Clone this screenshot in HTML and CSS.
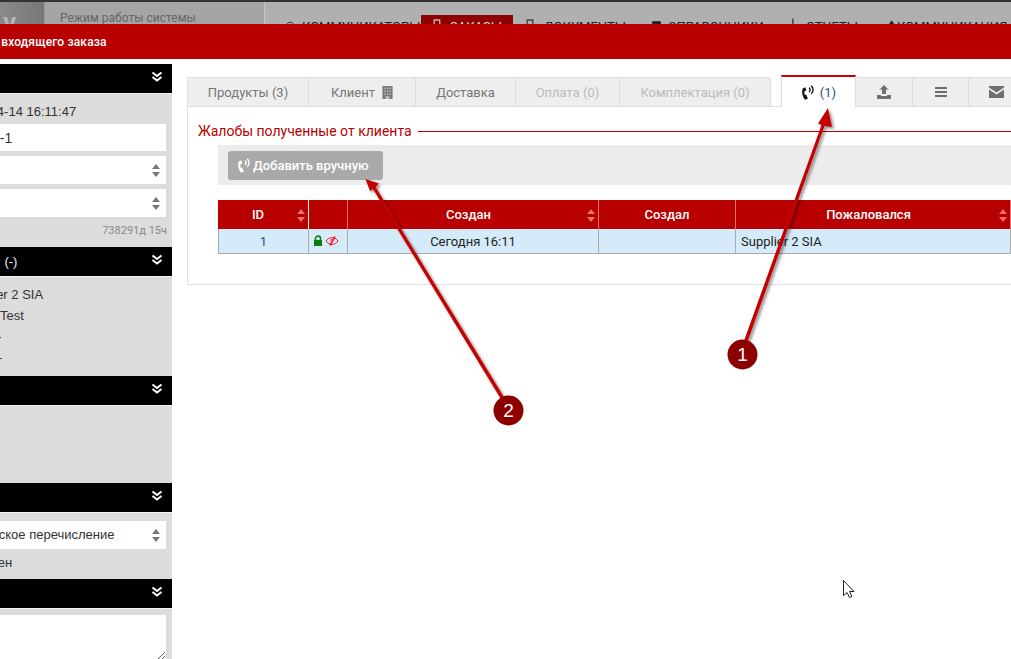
FILE: index.html
```html
<!DOCTYPE html>
<html lang="en">
<head>
  <meta charset="UTF-8">
  <title>Данные входящего заказа</title>
  <link rel="stylesheet" href="styles.css">
</head>
<body>
  <svg class="defs" width="0" height="0">
    <symbol id="chev" viewBox="0 0 12 12"><path d="M1.500 1.500 6 5l4.500-3.500M1.500 6 6 9.500 10.500 6" fill="none" stroke="currentColor" stroke-width="2"/></symbol>
    <symbol id="phone" viewBox="0 0 14 14"><path d="M4 2 1.800 3C.4 6 1.100 10.800 3.800 13.700L6.400 12.500 4.800 8.800 3.500 9.300C3.100 8 3.100 6.500 3.400 5.600L5 5.300z" fill="currentColor"/><path d="M7.500 2.500a2.500 2.500 0 0 1 0 4M9.500.8a4.700 4.700 0 0 1 0 7.400" fill="none" stroke="currentColor" stroke-width="1.300"/></symbol>
  </svg>

  <!-- top menu, dimmed behind the window -->
  <div class="topbar">
    <div class="brand">v</div>
    <div class="mode">Режим работы системы</div>
    <div class="menu">
      <span class="menu-item m1"><i class="mi">○</i>Коммуникаторы</span>
      <span class="menu-item m2 active"><i class="mi">▯</i>Заказы</span>
      <span class="menu-item m3"><i class="mi">▯</i>Документы</span>
      <span class="menu-item m4"><i class="mi">■</i>Справочники</span>
      <span class="menu-item m5"><i class="mi">⊥</i>Отчеты</span>
      <span class="menu-item m6"><i class="mi">♦</i>Коммуникация</span>
    </div>
  </div>

  <div class="window">
    <div class="window-title">Данные входящего заказа</div>
    <div class="window-body">

      <div class="sidebar">
        <div class="panel-head"><svg class="chev"><use href="#chev"/></svg></div>
        <div class="panel p-main">
          <div class="line l-date">Создан: 2021-04-14 16:11:47</div>
          <div class="field f-num">Заказ-2021-04-1</div>
          <div class="field select"><i class="updown"></i></div>
          <div class="field select"><i class="updown"></i></div>
          <div class="age">738291д 15ч</div>
        </div>
        <div class="panel-head head-client">Контрагент: (-)<svg class="chev"><use href="#chev"/></svg></div>
        <div class="panel p-client">
          <div class="line l-sup">Supplier 2 SIA</div>
          <div class="line l-test">Контакт: Test</div>
          <div class="line l-phone">Телефон: -</div>
          <div class="line l-mail">Эл. почта: -</div>
        </div>
        <div class="panel-head"><svg class="chev"><use href="#chev"/></svg></div>
        <div class="panel p-empty"></div>
        <div class="panel-head"><svg class="chev"><use href="#chev"/></svg></div>
        <div class="panel p-pay">
          <div class="field select f-pay">Банковское перечисление<i class="updown"></i></div>
          <div class="line l-paid">Не оплачен</div>
        </div>
        <div class="panel-head"><svg class="chev"><use href="#chev"/></svg></div>
        <div class="panel p-note">
          <textarea class="memo"></textarea>
        </div>
      </div>

      <div class="content">
        <div class="tabs">
          <div class="tab">Продукты (3)</div>
          <div class="tab">Клиент
            <svg class="tab-ico" width="11" height="13" viewBox="0 0 11 14"><path d="M0 0h11v14H0z" fill="#7b7b7b"/><path d="M2 2h1.500v1.500H2zM4.800 2h1.500v1.500H4.800zM7.500 2H9v1.500H7.500zM2 5h1.500v1.500H2zM4.800 5h1.500v1.500H4.800zM7.500 5H9v1.500H7.500zM2 8h1.500v1.500H2zM4.800 8h1.500v1.500H4.800zM7.500 8H9v1.500H7.500zM3.500 11h4v3h-4z" fill="#c4c4c4"/></svg>
          </div>
          <div class="tab">Доставка</div>
          <div class="tab muted">Оплата (0)</div>
          <div class="tab muted">Комплектация (0)</div>
          <div class="tab spacer"></div>
          <div class="tab current"><svg class="cur-ico" width="15" height="15"><use href="#phone"/></svg> <span class="count">(1)</span></div>
          <div class="tab">
            <svg width="14" height="14" viewBox="0 0 14 14"><path d="M7 0l4.500 4.500H9V9H5V4.500H2.500zM0 10h4v1h6v-1h4v4H0z" fill="#6f6f6f"/></svg>
          </div>
          <div class="tab">
            <svg width="14" height="12" viewBox="0 0 14 12"><path d="M1 1h12v2H1zM1 5h12v2H1zM1 9h12v2H1z" fill="#6f6f6f"/></svg>
          </div>
          <div class="tab tab-mail">
            <svg width="15" height="12" viewBox="0 0 15 12"><path d="M0 0h15v1.500L7.500 6.500 0 1.500zM0 3.500l7.500 5 7.500-5V12H0z" fill="#6f6f6f"/></svg>
          </div>
        </div>

        <div class="tab-body">
          <div class="legend"><span>Жалобы полученные от клиента</span></div>
          <div class="toolbar">
            <button class="btn"><svg class="btn-ico" width="15" height="15"><use href="#phone"/></svg>Добавить вручную</button>
          </div>
          <table class="grid">
            <colgroup>
              <col class="c-id"><col class="c-flags"><col class="c-date"><col class="c-by"><col class="c-who">
            </colgroup>
            <thead>
              <tr>
                <th class="sort">ID<i class="updown"></i></th>
                <th></th>
                <th class="sort">Создан<i class="updown"></i></th>
                <th>Создал</th>
                <th class="sort">Пожаловался<i class="updown"></i></th>
              </tr>
            </thead>
            <tbody>
              <tr>
                <td class="center num">1</td>
                <td class="flags">
                  <svg width="10" height="12" viewBox="0 0 10 12"><path d="M2.500 5V3.500a2.500 2.500 0 0 1 5 0V5" fill="none" stroke="#0a7d0a" stroke-width="1.500"/><path d="M1 5h8v6H1z" fill="#0a7d0a"/></svg>
                  <svg width="14" height="10" viewBox="0 0 14 10"><path d="M1 5c3-4.500 9-4.500 12 0-3 4.500-9 4.500-12 0z" fill="none" stroke="#f01a2a" stroke-width="1"/><path d="M5 5a2.200 2.200 0 0 1 3-2z" fill="#f01a2a"/><path d="M10 .5 5 9.500" stroke="#f01a2a" stroke-width="1.600"/></svg>
                </td>
                <td class="center">Сегодня 16:11</td>
                <td></td>
                <td>Supplier 2 SIA</td>
              </tr>
            </tbody>
          </table>
        </div>
      </div>
    </div>
  </div>

  <!-- callouts drawn over the screenshot -->
  <svg class="callouts" width="1011" height="659" viewBox="0 0 1011 659">
    <defs>
      <filter id="soft" x="-20%" y="-20%" width="140%" height="140%">
        <feDropShadow dx="2" dy="2" stdDeviation="1.500" flood-color="#000" flood-opacity="0.45"/>
      </filter>
    </defs>
    <g fill="#c40000" filter="url(#soft)">
      <path d="M740 352 821.500 125 818 123.500 828 108 832 127 824.500 126 743.500 353z"/>
      <path d="M507 409 373 189 370 191 365.500 179 379 183.500 375.500 187 510 407z"/>
    </g>
    <circle cx="742.500" cy="354.500" r="15" fill="#8c0000"/>
    <circle cx="508.500" cy="410.500" r="15" fill="#8c0000"/>
    <text x="742.500" y="361" class="callout-num">1</text>
    <text x="508.500" y="417" class="callout-num">2</text>
    <path d="M843.500 580.500v15l3.500-3 2.500 5 2.500-1-2.500-5h4.500z" fill="#fff" stroke="#222" stroke-width="1"/>
  </svg>
</body>
</html>
```

FILE: styles.css
```css
html, body {
  margin: 0;
  padding: 0;
  height: 100%;
  overflow: hidden;
}

body {
  position: relative;
  width: 1011px;
  height: 659px;
  font-family: 'Roboto', sans-serif;
  font-size: 13px;
  color: #333;
  background-color: white;
}

.defs {
  position: absolute;
}

/* top menu */
.topbar {
  display: flex;
  height: 22px;
  border-top: 2px solid #333;
  background-color: #b0b0b0;
  overflow: hidden;
}

.brand {
  flex: none;
  width: 44px;
  box-sizing: border-box;
  padding-top: 8px;
  padding-left: 3px;
  background: linear-gradient(to right, #8a8a8a, #777);
  color: #b5b5b5;
  font-size: 26px;
  font-weight: 700;
  line-height: 24px;
}

.mode {
  flex: none;
  width: 221px;
  box-sizing: border-box;
  padding: 9px 0 0 15px;
  margin-left: 0;
  background-color: #a5a5a5;
  border-left: 1px solid #999;
  border-right: 1px solid #c4c4c4;
  color: #666;
  font-size: 12px;
  line-height: 14px;
}

.menu {
  display: flex;
  flex: none;
}

.menu-item {
  display: block;
  flex: none;
  padding-top: 17px;
  color: #222;
  font-size: 13px;
  line-height: 15px;
  text-transform: uppercase;
  white-space: nowrap;
  box-sizing: border-box;
}

.mi {
  display: inline-block;
  font-size: 18px;
  font-style: normal;
  line-height: 0;
}

.m1 { width: 156px; padding-left: 20px; }
.m2 { width: 92px; padding-left: 11px; }
.m3 { width: 138px; padding-left: 12px; }
.m4 { width: 134px; }
.m5 { width: 102px; }
.m6 { width: 200px; }

.m1 .mi { width: 17px; }
.m2 .mi { width: 18px; }
.m3 .mi { width: 19px; }
.m4 .mi { width: 17px; }
.m5 .mi { width: 21px; }
.m6 .mi { width: 10px; }

.menu-item.active {
  margin-top: 13px;
  padding-top: 4px;
  background-color: #8f0000;
  color: #ddd;
}

/* window */
.window {
  margin-left: -120px;
  width: 1300px;
}

.window-title {
  height: 35px;
  padding-left: 72px;
  background-color: #b80000;
  color: white;
  font-size: 12px;
  font-weight: 500;
  letter-spacing: 0.15px;
  line-height: 36px;
}

.window-body {
  display: flex;
  align-items: flex-start;
  gap: 15px;
  padding-top: 5px;
}

/* left column */
.sidebar {
  flex: none;
  width: 292px;
  height: 600px;
  background-color: #dcdcdc;
  font-family: 'Liberation Sans', sans-serif;
}

.panel-head {
  display: flex;
  align-items: center;
  justify-content: flex-end;
  height: 29px;
  padding-left: 43px;
  background-color: black;
  border-bottom: 1px solid #f4f4f4;
  color: #eee;
  font-size: 14px;
  white-space: nowrap;
}

.head-client {
  padding-left: 50px;
  font-size: 13px;
}

.chev {
  width: 12px;
  height: 12px;
  margin-left: auto;
  margin-right: 9px;
  margin-top: -3px;
  color: white;
}

.panel {
  box-sizing: border-box;
  padding-right: 6px;
}

.p-main { height: 153px; padding-top: 7px; }
.p-client { height: 99px; padding-top: 7px; }
.p-empty { height: 77px; }
.p-pay { height: 66px; padding-top: 8px; }
.p-note { padding-top: 6px; }

.line {
  line-height: 21px;
  white-space: nowrap;
}

.l-date { margin-left: 25px; height: 23px; }
.l-sup { margin-left: 80px; }
.l-test { margin-left: 66px; }
.l-phone { margin-left: 56px; }
.l-mail { margin-left: 53px; }
.l-paid { margin-left: 62px; line-height: 28px; }

.field {
  position: relative;
  height: 28px;
  margin-bottom: 5px;
  background-color: white;
  font-size: 14px;
  line-height: 28px;
  white-space: nowrap;
}

.f-num { padding-left: 27px; height: 27px; }
.f-pay { padding-left: 76px; font-size: 13px; height: 28px; margin-bottom: 0; }

.memo {
  display: block;
  width: 100%;
  height: 45px;
  box-sizing: border-box;
  padding: 0;
  border: none;
  outline: none;
  background-color: white;
}

.age {
  margin-top: 7px;
  text-align: right;
  color: #8a8a8a;
  font-family: 'Roboto', sans-serif;
  font-size: 11px;
  line-height: 14px;
  margin-right: -1px;
}

/* up/down arrows on selects and sortable columns */
.updown {
  position: absolute;
  right: 6px;
  top: 50%;
  width: 8px;
  height: 13px;
  margin-top: -6px;
}

.updown::before,
.updown::after {
  content: "";
  position: absolute;
  left: 0;
  border-left: 4px solid transparent;
  border-right: 4px solid transparent;
}

.updown::before {
  top: 0;
  border-bottom: 5px solid #777;
}

.updown::after {
  bottom: 0;
  border-top: 5px solid #777;
}

/* tabs */
.content {
  flex: none;
  width: 1100px;
}

.tabs {
  display: grid;
  grid-template-columns: 122px 107px 100px 104px 151px 10px 75px 57px 56px 60px;
  height: 32px;
  margin-top: 11px;
  box-sizing: border-box;
}

.tab {
  display: flex;
  align-items: center;
  justify-content: center;
  gap: 7px;
  height: 30px;
  margin-top: 2px;
  box-sizing: border-box;
  padding-top: 0;
  background-color: #eee;
  border-top: 1px solid #e0e0e0;
  border-bottom: 1px solid #e0e0e0;
  border-right: 1px solid #ddd;
  color: #777;
  font-size: 13px;
}

.tab:first-child {
  border-left: 1px solid #e0e0e0;
}

.tab.muted {
  color: #bbb;
}

.tab.spacer {
  background-color: white;
  border-top: none;
  border-right: none;
}

.tab.current {
  height: 32px;
  margin-top: 0;
  gap: 4px;
  background-color: white;
  border-top: 2px solid #c40000;
  border-bottom: none;
  border-left: 1px solid #ddd;
  color: #111;
}

.tab-mail {
  justify-content: flex-start;
  padding-left: 20px;
}

.count {
  color: #24527a;
}

.tab-body {
  height: 178px;
  box-sizing: border-box;
  padding: 16px 0 0 10px;
  border-left: 1px solid #e0e0e0;
  border-bottom: 1px solid #e0e0e0;
}

.legend {
  display: flex;
  align-items: center;
  gap: 6px;
  height: 16px;
  color: #b80000;
  font-size: 14px;
  line-height: 16px;
  white-space: nowrap;
}

.legend::after {
  content: "";
  flex: 1;
  height: 1px;
  background-color: #b80000;
}

.toolbar {
  height: 40px;
  margin: 6px 0 15px 20px;
  box-sizing: border-box;
  padding: 6px 0 0 10px;
  background-color: #ececec;
}

.btn {
  display: flex;
  align-items: center;
  gap: 1px;
  width: 155px;
  height: 29px;
  padding: 0 0 0 9px;
  border: none;
  border-radius: 3px;
  background-color: #a9a9a9;
  color: white;
  font-family: 'Roboto', sans-serif;
  font-size: 13px;
  font-weight: 500;
}

/* table */
.grid {
  width: 792px;
  margin-left: 20px;
  table-layout: fixed;
  border-collapse: collapse;
}

.c-id { width: 90px; }
.c-flags { width: 39px; }
.c-date { width: 251px; }
.c-by { width: 137px; }
.c-who { width: 275px; }

.grid th {
  position: relative;
  height: 29px;
  padding: 0;
  background-color: #b80000;
  border-right: 1px solid #e87070;
  color: white;
  font-size: 13px;
  font-weight: 500;
}

.grid th.sort {
  padding-right: 9px;
}

.grid th:first-child {
  padding-right: 11px;
  border-left: 1px solid #b80000;
  border-right-color: #f4f4f4;
}

.grid th .updown::before {
  border-bottom-color: #f07070;
}

.grid th .updown::after {
  border-top-color: #f07070;
}

.grid th .updown {
  right: 3px;
}

.grid td {
  height: 24px;
  padding: 0 5px;
  background-color: #d6ebf9;
  border: 1px solid #aaa;
  border-top: none;
  color: #222;
  font-size: 13px;
}

.center { text-align: center; }
.grid td.num { color: #24527a; }

.grid td.flags {
  padding: 0 0 0 4px;
  white-space: nowrap;
  font-size: 0;
  line-height: 12px;
}

.flags svg {
  vertical-align: middle;
}

.flags svg + svg {
  margin-left: 2px;
}

/* callouts */
.callouts {
  position: absolute;
  left: 0;
  top: 0;
  pointer-events: none;
}

.callout-num {
  fill: white;
  font-family: 'Liberation Sans', sans-serif;
  font-size: 19px;
  text-anchor: middle;
}
```
